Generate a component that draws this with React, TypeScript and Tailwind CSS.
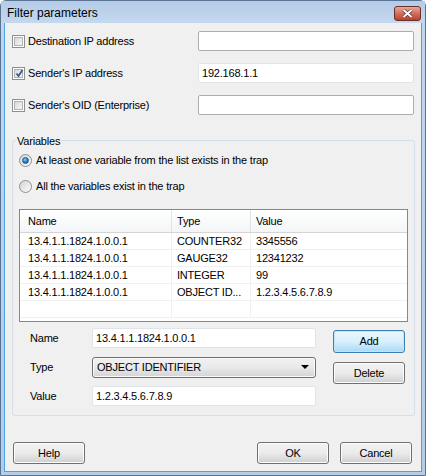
import React from "react";

const rows = [
  { name: "13.4.1.1.1824.1.0.0.1", type: "COUNTER32", value: "3345556" },
  { name: "13.4.1.1.1824.1.0.0.1", type: "GAUGE32", value: "12341232" },
  { name: "13.4.1.1.1824.1.0.0.1", type: "INTEGER", value: "99" },
  { name: "13.4.1.1.1824.1.0.0.1", type: "OBJECT ID...", value: "1.2.3.4.5.6.7.8.9" },
];

function CheckBox({ checked, label }: { checked?: boolean; label: string }) {
  return (
    <div className="flex items-center gap-[3px] w-[186px]">
      <div className="w-[13px] h-[13px] border border-[#8e8f8f] bg-white p-[1px]">
        <div className="relative w-full h-full border border-[#aeb1b5] bg-gradient-to-br from-[#d8d9db] to-[#f6f6f6]">
          {checked && (
            <svg className="absolute left-[0px] top-[-1px]" width="9" height="9" viewBox="0 0 9 9">
              <path d="M1.5 4.5 L3.5 7 L7.5 1" stroke="#3b5a8c" strokeWidth="1.8" fill="none" />
            </svg>
          )}
        </div>
      </div>
      <span>{label}</span>
    </div>
  );
}

function Radio({ checked, label }: { checked?: boolean; label: string }) {
  return (
    <div className="flex items-center gap-[4px] h-[16px]">
      <div className="w-[13px] h-[13px] rounded-full border border-[#8e8f8f] bg-gradient-to-br from-[#d4d5d7] to-[#fbfbfb] flex items-center justify-center">
        {checked && (
          <div className="w-[7px] h-[7px] rounded-full bg-[radial-gradient(circle_at_40%_35%,#8cd2ff,#1a6fbf_60%,#0d4a8a)] border border-[#2a5a8c]" />
        )}
      </div>
      <span>{label}</span>
    </div>
  );
}

function TextBox({ value, light, w }: { value?: string; light?: boolean; w: string }) {
  return (
    <div
      className={`${w} h-[20px] bg-white border rounded-[2px] flex items-center px-[3px] ${
        light ? "border-[#dfe3ea]" : "border-[#abadb3]"
      }`}
    >
      {value}
    </div>
  );
}

function Button({ label, primary, h = "h-[22px]" }: { label: string; primary?: boolean; h?: string }) {
  return (
    <div
      className={`w-[72px] ${h} rounded-[3px] border flex items-center justify-center ${
        primary
          ? "border-[#3c7fb1] bg-gradient-to-b from-[#eaf6fd] via-[#d9f0fc] to-[#a7d9f5] shadow-[inset_0_0_0_1px_#c4e5f6]"
          : "border-[#707070] bg-gradient-to-b from-[#f2f2f2] via-[#ebebeb] to-[#cfcfcf] shadow-[inset_0_0_0_1px_#fcfcfc]"
      }`}
    >
      {label}
    </div>
  );
}

export default function App() {
  return (
    <div
      className="w-[426px] h-[476px] flex flex-col border border-[#5a7394] rounded-t-[6px] bg-gradient-to-b from-[#c2d6ee] to-[#b6cde8] text-[11px] tracking-[-0.2px] text-black"
      style={{ fontFamily: '"Liberation Sans", Arial, sans-serif' }}
    >
      {/* title bar */}
      <div className="h-[22px] flex items-center justify-between pl-[6px] pr-[4px] bg-gradient-to-b from-[#b4cce8] to-[#c4d8ee]">
        <span className="text-[12px] tracking-normal mt-[1px]">Filter parameters</span>
        <div className="w-[27px] h-[15px] mt-[2px] rounded-[3px] border border-[#6d2e25] bg-gradient-to-b from-[#e4a99c] via-[#cf6f5d] to-[#b9412d] flex items-center justify-center">
          <svg width="11" height="9" viewBox="0 0 11 9">
            <path d="M1.5 1 L9.5 8 M9.5 1 L1.5 8" stroke="#5a2a24" strokeWidth="3.2" />
            <path d="M1.5 1 L9.5 8 M9.5 1 L1.5 8" stroke="#ffffff" strokeWidth="2" />
          </svg>
        </div>
      </div>

      {/* client area */}
      <div className="mx-[3px] mb-[3px] flex-1 bg-[#f0f0f0] border-r border-b border-l border-[#4aa2e0] px-[7px] pt-[8px]">
        <div className="flex flex-col gap-[12px]">
          <div className="flex items-center h-[20px]">
            <CheckBox label="Destination IP address" />
            <TextBox w="w-[216px]" />
          </div>
          <div className="flex items-center h-[20px]">
            <CheckBox checked label="Sender's IP address" />
            <TextBox w="w-[216px]" value="192.168.1.1" light />
          </div>
          <div className="flex items-center h-[20px]">
            <CheckBox label="Sender's OID (Enterprise)" />
            <TextBox w="w-[216px]" />
          </div>
        </div>

        {/* Variables group */}
        <div className="relative mt-[25px] w-[403px] border border-[#d5dfe5] rounded-[3px] pl-[6px] pt-[11px] pb-[9px]">
          <span className="absolute left-[3px] top-[-8px] bg-[#f0f0f0] px-[1px]">Variables</span>
          <div className="flex flex-col gap-[10px]">
            <Radio checked label="At least one variable from the list exists in the trap" />
            <Radio label="All the variables exist in the trap" />
          </div>

          <div className="mt-[15px] w-[389px] h-[113px] border border-[#828790] bg-white flex flex-col overflow-hidden">
            <div className="h-[23px] flex border-b border-[#d5d5d5] bg-gradient-to-b from-[#ffffff] to-[#f4f5f7]">
              <div className="w-[152px] pl-[8px] flex items-center border-r border-[#e2e3e5]">Name</div>
              <div className="w-[79px] pl-[5px] flex items-center border-r border-[#e2e3e5]">Type</div>
              <div className="flex-1 pl-[5px] flex items-center">Value</div>
            </div>
            {[...rows, { name: "", type: "", value: "" }].map((r, i) => (
              <div key={i} className="h-[17px] flex border-b border-[#f0f0f0] shrink-0">
                <div className="w-[152px] pl-[8px] flex items-center border-r border-[#f0f0f0]">{r.name}</div>
                <div className="w-[79px] pl-[5px] flex items-center border-r border-[#f0f0f0]">{r.type}</div>
                <div className="flex-1 pl-[5px] flex items-center">{r.value}</div>
              </div>
            ))}
          </div>

          <div className="flex mt-[6px]">
            <div className="flex flex-col gap-[9px]">
              <div className="flex items-center h-[20px]">
                <span className="w-[73px] pl-[11px]">Name</span>
                <TextBox w="w-[224px]" value="13.4.1.1.1824.1.0.0.1" light />
              </div>
              <div className="flex items-center h-[20px]">
                <span className="w-[73px] pl-[11px]">Type</span>
                <div className="w-[224px] h-[21px] rounded-[3px] border border-[#707070] bg-gradient-to-b from-[#f2f2f2] via-[#e9e9e9] to-[#d4d4d4] shadow-[inset_0_0_0_1px_#fafafa] flex items-center justify-between pl-[4px] pr-[6px]">
                  <span>OBJECT IDENTIFIER</span>
                  <svg width="8" height="4" viewBox="0 0 8 4">
                    <path d="M0 0 L8 0 L4 4 Z" fill="#000" />
                  </svg>
                </div>
              </div>
              <div className="flex items-center h-[20px]">
                <span className="w-[73px] pl-[11px]">Value</span>
                <TextBox w="w-[224px]" value="1.2.3.4.5.6.7.8.9" light />
              </div>
            </div>
            <div className="ml-[17px] pt-[2px] flex flex-col gap-[9px]">
              <Button label="Add" primary h="h-[23px]" />
              <Button label="Delete" />
            </div>
          </div>
        </div>

        <div className="mt-[26px] flex items-center pl-[1px] pr-[2px]">
          <Button label="Help" />
          <div className="flex-1" />
          <div className="flex gap-[11px]">
            <Button label="OK" />
            <Button label="Cancel" />
          </div>
        </div>
      </div>
    </div>
  );
}
